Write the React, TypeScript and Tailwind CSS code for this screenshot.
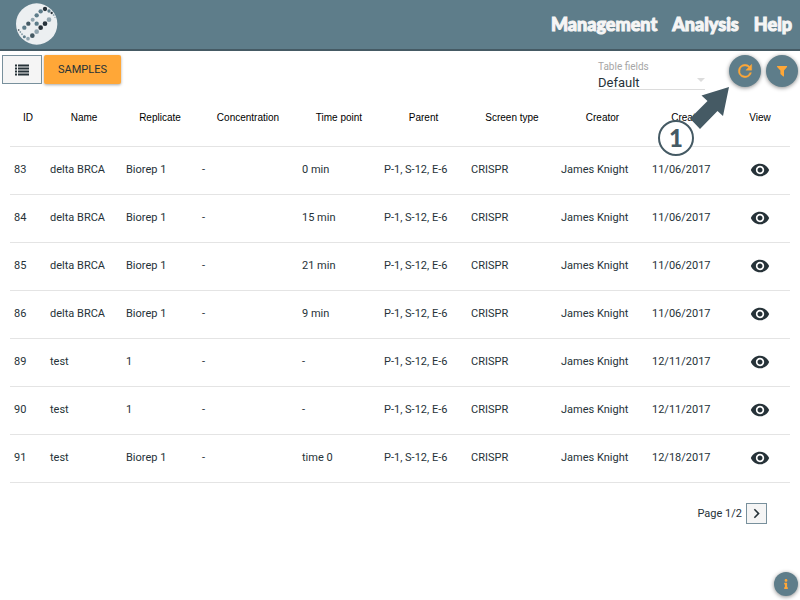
import { FaInfo } from "react-icons/fa";
import { MdChevronRight, MdVisibility } from "react-icons/md";

const columns = [
  { title: "ID", width: "w-[36px]" },
  { title: "Name", width: "w-[76px]" },
  { title: "Replicate", width: "w-[76px]" },
  { title: "Concentration", width: "w-[100px]" },
  { title: "Time point", width: "w-[82px]" },
  { title: "Parent", width: "w-[87px]" },
  { title: "Screen type", width: "w-[90px]" },
  { title: "Creator", width: "w-[91px]" },
  { title: "Created", width: "w-[82px]" },
  { title: "View", width: "w-[60px]" },
];

const samples = [
  ["83", "delta BRCA", "Biorep 1", "-", "0 min", "11/06/2017"],
  ["84", "delta BRCA", "Biorep 1", "-", "15 min", "11/06/2017"],
  ["85", "delta BRCA", "Biorep 1", "-", "21 min", "11/06/2017"],
  ["86", "delta BRCA", "Biorep 1", "-", "9 min", "11/06/2017"],
  ["89", "test", "1", "-", "-", "12/11/2017"],
  ["90", "test", "1", "-", "-", "12/11/2017"],
  ["91", "test", "Biorep 1", "-", "time 0", "12/18/2017"],
].map(([id, name, replicate, concentration, time, created]) => ({
  id,
  cells: [id, name, replicate, concentration, time, "P-1, S-12, E-6", "CRISPR", "James Knight", created],
}));

const logoDots: [number, number, number, string][] = [
  [135, 28, 6.5, "#27323a"],
  [122, 35, 6.5, "#5e7d8a"],
  [110, 47, 6.5, "#5e7d8a"],
  [98, 60, 6, "#90a4ae"],
  [85, 72, 6.5, "#455a64"],
  [73, 84, 6.5, "#5e7d8a"],
  [147, 34, 5, "#5e7d8a"],
  [155, 40, 3.5, "#27323a"],
  [161, 46, 3, "#90a4ae"],
  [165, 53, 2, "#90a4ae"],
  [147, 60, 7, "#90a4ae"],
  [110, 72, 6.5, "#5e7d8a"],
  [135, 72, 7, "#27323a"],
  [122, 84, 7, "#27323a"],
  [110, 96, 7, "#90a4ae"],
  [97, 108, 7, "#455a64"],
  [84, 117, 5.5, "#90a4ae"],
  [73, 111, 4.5, "#5e7d8a"],
  [66, 104, 3, "#90a4ae"],
  [61, 97, 2.5, "#5e7d8a"],
  [56, 91, 2.5, "#27323a"],
];

function Logo() {
  return (
    <svg viewBox="48 10 126 126" className="size-[42px]" role="img" aria-label="Home">
      <circle cx="110" cy="73" r="62" fill="#eceff1" />
      {logoDots.map(([x, y, r, fill]) => (
        <circle key={`${x}-${y}`} cx={x} cy={y} r={r} fill={fill} />
      ))}
    </svg>
  );
}

function ListIcon() {
  return (
    <svg viewBox="0 0 14 12" className="h-3 w-3.5" fill="currentColor" aria-hidden="true">
      {[0, 3, 6, 9].map((y) => (
        <path key={y} d={`M0 ${y + 0.5}h2v2h-2zM3 ${y + 0.5}h11v2h-11z`} />
      ))}
    </svg>
  );
}

function RefreshIcon() {
  return (
    <svg viewBox="0 0 24 24" className="size-5" fill="currentColor" stroke="currentColor" strokeWidth="0.5" aria-hidden="true">
      <path d="M17.65 6.35A7.96 7.96 0 0 0 12 4a8 8 0 1 0 7.73 10h-2.08A6 6 0 1 1 12 6c1.66 0 3.14.69 4.22 1.78L13 11h7V4l-2.35 2.35z" />
    </svg>
  );
}

function FilterIcon() {
  return (
    <svg viewBox="0 0 12 12" className="size-3" fill="currentColor" aria-hidden="true">
      <path d="M1.3 1H10.9Q11.5 1.4 11 2.1L8 5.4V11.2Q7.6 11.7 7 11.3L4.4 9V5.4L1.1 2.1Q.7 1.4 1.3 1Z" />
    </svg>
  );
}

function StepPointer() {
  return (
    <div className="pointer-events-none absolute top-[34px] right-[70px] h-[71px] w-[72px]">
      <svg viewBox="0 0 72 71" className="absolute inset-0 size-full" aria-hidden="true">
        <path d="M71 2 43.5 10.5 49.5 16 32 33.5 42 44 59.5 26 65 31Z" fill="#455a64" />
      </svg>
      <span className="absolute bottom-0 left-0 flex size-9 items-center justify-center rounded-full border-2 border-[#455a64] bg-white font-[Lato,sans-serif] text-2xl font-black text-[#455a64]">
        1
      </span>
    </div>
  );
}

export default function App() {
  return (
    <div className="relative min-h-screen bg-white font-[Roboto,sans-serif] text-[#263238]">
      <header className="flex h-[51px] items-center justify-between border-b-2 border-[#455a64] bg-[#5e7d8a] pr-2 pb-px pl-4">
        <a href="#home">
          <Logo />
        </a>
        <nav className="flex gap-[15px] font-[Lato,sans-serif] text-[18px] font-black text-[#f5f5f5] [-webkit-text-stroke:1px_#f5f5f5]">
          <a href="#management">Management</a>
          <a href="#analysis">Analysis</a>
          <a href="#help">Help</a>
        </nav>
      </header>

      <main className="relative">
        <div className="flex h-10 items-start justify-between pr-0.5 pl-0.5">
          <div className="flex gap-0.5 pt-1">
            <button aria-label="List" className="flex h-[29px] w-10 items-center justify-center border border-[#78909c] bg-[#f5f5f5]">
              <ListIcon />
            </button>
            <button className="h-[29px] rounded-xs bg-[#ffa737] px-[14px] pt-0.5 text-[11px] shadow-[0_1px_3px_rgba(0,0,0,0.35)]">SAMPLES</button>
          </div>
          <div className="flex gap-[5px] pt-1">
            <div className="relative mr-[19px] w-[107px] pt-1.5">
              <label htmlFor="fields" className="block text-[10px] leading-3 text-[#a6a6a6]">
                Table fields
              </label>
              <select id="fields" className="block h-[17px] w-full appearance-none border-b border-[#dcdcdc] bg-transparent pt-0.5 text-[13px] leading-4">
                <option>Default</option>
              </select>
              <span className="pointer-events-none absolute right-0 bottom-2 border-x-4 border-t-4 border-x-transparent border-t-[#dcdcdc]" />
            </div>
            <button aria-label="Refresh" className="flex size-8 items-center justify-center rounded-full bg-[#5e7d8a] text-[#ffa737] shadow-[0_1px_4px_rgba(0,0,0,0.45)]">
              <RefreshIcon />
            </button>
            <button aria-label="Filter" className="flex size-8 items-center justify-center rounded-full bg-[#5e7d8a] text-[#ffa737] shadow-[0_1px_4px_rgba(0,0,0,0.45)]">
              <FilterIcon />
            </button>
          </div>
        </div>

        <div className="px-2.5">
          <table className="w-full table-fixed border-collapse text-left text-[11px]">
            <thead>
              <tr className="h-[55px] border-b border-[#e4e4e4] font-['Liberation_Sans',sans-serif] text-[10px] text-black">
                {columns.map((column) => (
                  <th key={column.title} className={`${column.width} p-0 pb-0.5 text-center font-normal`}>
                    {column.title}
                  </th>
                ))}
              </tr>
            </thead>
            <tbody>
              {samples.map((sample) => (
                <tr key={sample.id} className="h-12 border-b border-[#e4e4e4]">
                  {sample.cells.map((cell, index) => (
                    <td key={index} className="px-1 py-0 whitespace-nowrap">
                      {cell}
                    </td>
                  ))}
                  <td className="p-0">
                    <button aria-label={`View sample ${sample.id}`} className="mx-auto block">
                      <MdVisibility size={20} />
                    </button>
                  </td>
                </tr>
              ))}
            </tbody>
          </table>
        </div>

        <div className="flex items-center justify-end gap-1 pt-5 pr-[33px] text-[11px]">
          <span className="pt-0.5">Page 1/2</span>
          <button aria-label="Next page" className="flex size-[21px] shrink-0 items-center justify-center border border-[#78909c] bg-[#f5f5f5]">
            <MdChevronRight size={19} className="shrink-0" />
          </button>
        </div>

        <StepPointer />
      </main>

      <button aria-label="Information" className="fixed right-0.5 bottom-1 flex size-6 items-center justify-center rounded-full bg-[#5e7d8a] text-[#ffa737] shadow-[0_1px_4px_rgba(0,0,0,0.45)]">
        <FaInfo size={10} />
      </button>
    </div>
  );
}
